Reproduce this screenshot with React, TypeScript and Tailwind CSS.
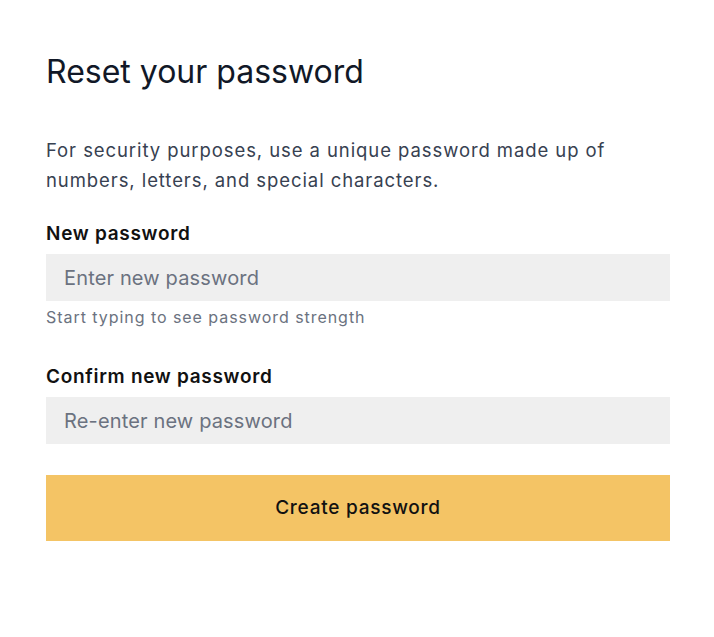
export default function App() {
  return (
    <div className="min-h-screen bg-white" style={{ fontFamily: 'Inter, "Noto Sans", sans-serif' }}>
      <div className="pl-[46px] pr-[44px] pt-[52px]">
        <h1 className="text-[32px] leading-[40px] text-[#111827] font-normal">Reset your password</h1>
        <p className="mt-[43px] max-w-[615px] text-[18.5px] leading-[30px] tracking-[0.92px] text-[#374151]">
          For security purposes, use a unique password made up of numbers, letters, and special characters.
        </p>
        <div className="mt-[25px]">
          <label className="block text-[19px] leading-[28px] font-semibold tracking-[0.7px] text-[#111]">New password</label>
          <input
            type="password"
            placeholder="Enter new password"
            className="mt-[6px] block w-full h-[47px] bg-[#efefef] px-[18px] text-[20px] tracking-[0.15px] text-[#111] placeholder:text-[#6b7280] outline-none"
          />
          <p className="mt-[4px] text-[16px] leading-[24px] tracking-[0.95px] text-[#6b7280]">Start typing to see password strength</p>
        </div>
        <div className="mt-[34px]">
          <label className="block text-[19px] leading-[28px] font-semibold tracking-[0.7px] text-[#111]">Confirm new password</label>
          <input
            type="password"
            placeholder="Re-enter new password"
            className="mt-[6px] block w-full h-[47px] bg-[#efefef] px-[18px] text-[20px] tracking-[0.15px] text-[#111] placeholder:text-[#6b7280] outline-none"
          />
        </div>
        <button className="mt-[31px] block w-full h-[66px] bg-[#f4c465] text-[19px] font-medium tracking-[0.75px] text-[#111]">
          Create password
        </button>
      </div>
    </div>
  );
}
